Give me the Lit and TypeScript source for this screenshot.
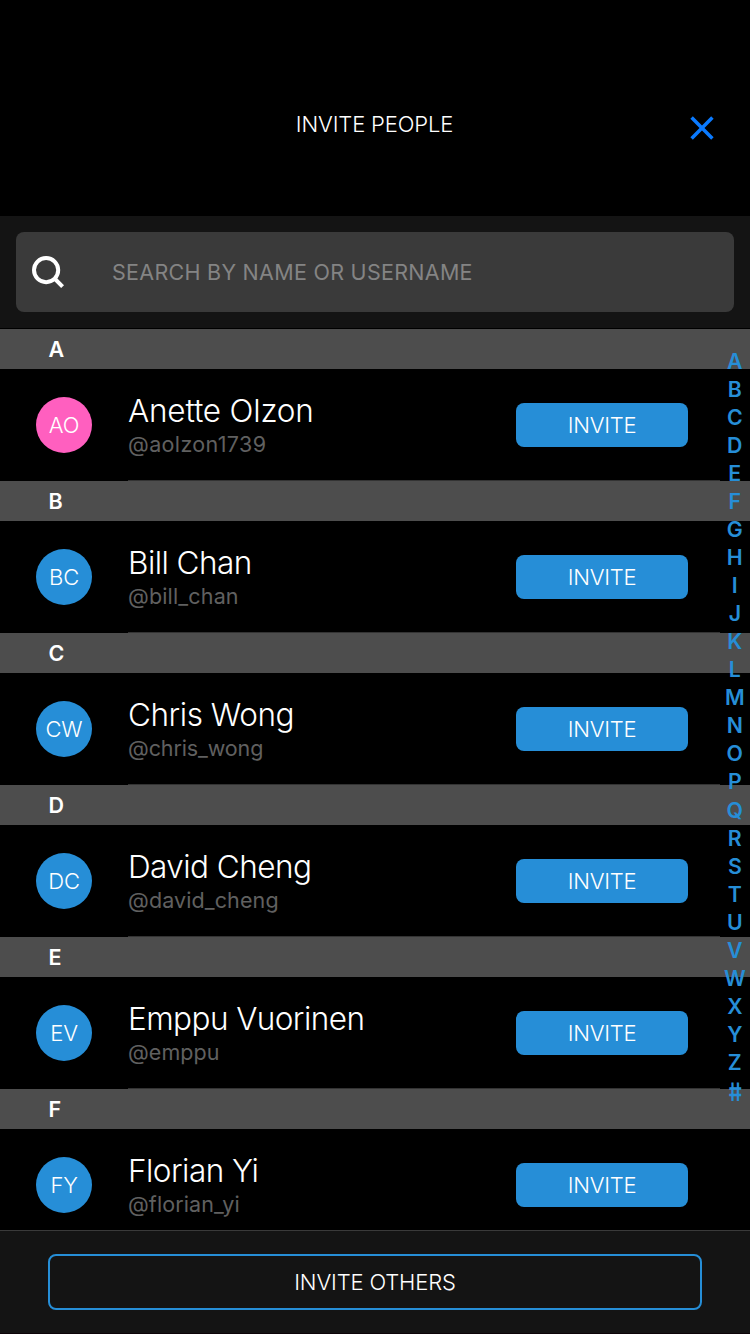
import { LitElement, html, css } from "lit";
import { customElement } from "lit/decorators.js";
import { classMap } from "lit/directives/class-map.js";
import { styleMap } from "lit/directives/style-map.js";

interface Person {
  section: string;
  initials: string;
  name: string;
  handle: string;
  /** Letter spacing in px for the name and the handle. */
  tracking: [number, number];
  pink?: boolean;
}

const PEOPLE: Person[] = [
  { section: "A", initials: "AO", name: "Anette Olzon", handle: "@aolzon1739", tracking: [-0.2, 0.36], pink: true },
  { section: "B", initials: "BC", name: "Bill Chan", handle: "@bill_chan", tracking: [-0.55, 0.16] },
  { section: "C", initials: "CW", name: "Chris Wong", handle: "@chris_wong", tracking: [-0.46, -0.12] },
  { section: "D", initials: "DC", name: "David Cheng", handle: "@david_cheng", tracking: [-0.55, 0.11] },
  { section: "E", initials: "EV", name: "Emppu Vuorinen", handle: "@emppu", tracking: [-0.57, 0.04] },
  { section: "F", initials: "FY", name: "Florian Yi", handle: "@florian_yi", tracking: [-0.53, 0.1] },
];

const INDEX = [..."ABCDEFGHIJKLMNOPQRSTUVWXYZ#"];

const spacing = (px: number) => styleMap({ letterSpacing: `${px}px` });

@customElement("app-root")
export class AppRoot extends LitElement {
  static styles = css`
    :host {
      display: flex;
      flex-direction: column;
      height: 1334px;
      overflow: hidden;
      background: #000;
      color: #fff;
      font-family: Inter, "Liberation Sans", sans-serif;
      font-size: 22px;
      font-weight: 300;
      line-height: 28px;
      white-space: nowrap;
    }
    * {
      box-sizing: border-box;
    }
    button {
      font: inherit;
      color: inherit;
      padding: 0;
      border: 0;
      background: none;
    }
    .header {
      flex: none;
      height: 216px;
      padding: 110px 34px 0;
      display: grid;
      grid-template-columns: 28px 1fr 28px;
    }
    .title {
      text-align: center;
      letter-spacing: -0.15px;
      padding-right: 1px;
    }
    .close {
      height: 28px;
      margin-top: 4px;
    }
    .close svg,
    .search svg {
      display: block;
    }
    .searchbar {
      flex: none;
      height: 113px;
      padding: 16px;
      background: #141414;
      border-bottom: 1px solid #000;
    }
    .search {
      height: 80px;
      display: flex;
      align-items: center;
      gap: 48px;
      padding-left: 16px;
      background: #3a3a3a;
      border-radius: 8px;
    }
    .placeholder {
      color: #848484;
      font-size: 21.5px;
      font-weight: 400;
      letter-spacing: 0.28px;
    }
    .content {
      flex: 1;
      min-height: 0;
      position: relative;
      overflow: hidden;
    }
    .section {
      height: 40px;
      padding: 6px 48px 0 48.5px;
      background: #4d4d4d;
      font-size: 21.5px;
      font-weight: 600;
    }
    .row {
      height: 112px;
      display: grid;
      grid-template-columns: 92px 1fr;
      padding: 0 30px 0 36px;
    }
    .avatar {
      width: 56px;
      height: 56px;
      margin-top: 28px;
      border-radius: 50%;
      background: #268ed7;
      display: flex;
      align-items: center;
      justify-content: center;
      letter-spacing: -0.2px;
    }
    .pink {
      background: #ff5fbf;
    }
    .body {
      display: flex;
      justify-content: space-between;
      border-bottom: 1px solid #333;
      padding-right: 32px;
    }
    .name {
      margin-top: 23px;
      font-size: 31.5px;
      line-height: 38px;
    }
    .handle {
      color: #606060;
      font-size: 21.5px;
      font-weight: 400;
    }
    .invite {
      width: 172px;
      height: 44px;
      margin-top: 34px;
      border-radius: 8px;
      background: #268ed7;
      letter-spacing: -0.25px;
    }
    .index {
      position: absolute;
      top: 18px;
      right: 0;
      width: 30.4px;
      color: #268ed7;
      font-size: 21.3px;
      font-weight: 600;
      text-align: center;
    }
    .letter {
      height: 28px;
    }
    .letter:nth-child(17) {
      margin-top: 1px;
    }
    .hash {
      transform: translateY(1px) skewX(8deg) scaleY(1.2);
    }
    .footer {
      flex: none;
      height: 104px;
      padding: 23px 48px 0;
      background: #141414;
      border-top: 1px solid #3a3a3a;
      border-bottom: 1px solid #0c0408;
    }
    .others {
      display: block;
      width: 100%;
      height: 56px;
      border: 2px solid #268ed7;
      border-radius: 8px;
      letter-spacing: -0.15px;
    }
  `;

  render() {
    return html`
      <header class="header">
        <span></span>
        <div class="title">INVITE PEOPLE</div>
        <button class="close" aria-label="Close">
          <svg width="28" height="28" viewBox="0 0 28 28" fill="none" stroke="#0a7aff" stroke-width="3.5">
            <path d="M3.6 3.6 24.4 24.4M24.4 3.6 3.6 24.4" />
          </svg>
        </button>
      </header>
      <div class="searchbar">
        <div class="search">
          <svg width="32" height="32" viewBox="0 0 32 32" fill="none" stroke="#fff" stroke-width="4">
            <circle cx="14.1" cy="14.1" r="12.1" />
            <path d="M22 22 30.6 30.6" />
          </svg>
          <span class="placeholder">SEARCH BY NAME OR USERNAME</span>
        </div>
      </div>
      <main class="content">
        ${PEOPLE.map(
          (p) => html`
            <div class="section">${p.section}</div>
            <div class="row">
              <div class=${classMap({ avatar: true, pink: !!p.pink })}>${p.initials}</div>
              <div class="body">
                <div>
                  <div class="name" style=${spacing(p.tracking[0])}>${p.name}</div>
                  <div class="handle" style=${spacing(p.tracking[1])}>${p.handle}</div>
                </div>
                <button class="invite">INVITE</button>
              </div>
            </div>
          `
        )}
        <nav class="index">
          ${INDEX.map((l) => html`<div class=${classMap({ letter: true, hash: l === "#" })}>${l}</div>`)}
        </nav>
      </main>
      <footer class="footer">
        <button class="others">INVITE OTHERS</button>
      </footer>
    `;
  }
}
